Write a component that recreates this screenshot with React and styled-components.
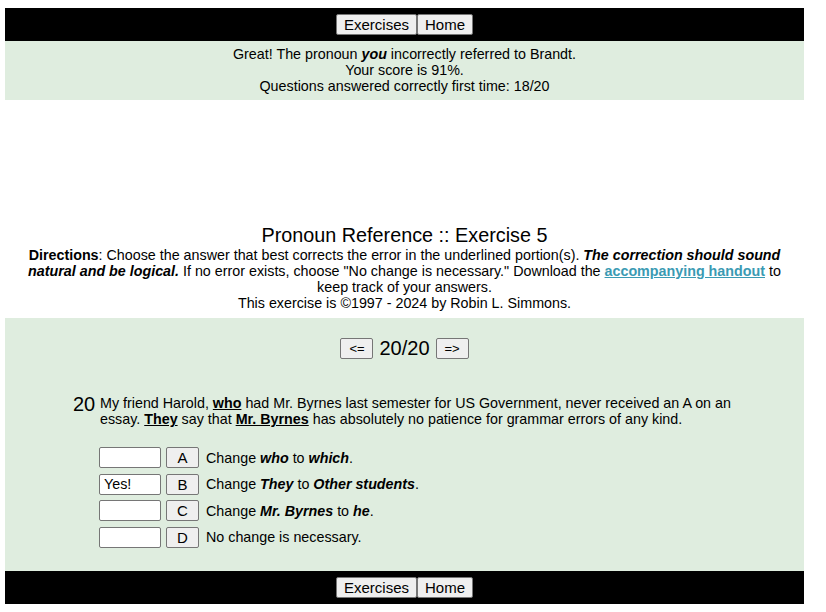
import styled, { createGlobalStyle } from 'styled-components';

const answers = [
    { letter: 'A', value: '', text: <>Change <b><i>who</i></b> to <b><i>which</i></b>.</> },
    { letter: 'B', value: 'Yes!', text: <>Change <b><i>They</i></b> to <b><i>Other students</i></b>.</> },
    { letter: 'C', value: '', text: <>Change <b><i>Mr. Byrnes</i></b> to <b><i>he</i></b>.</> },
    { letter: 'D', value: '', text: <>No change is necessary.</> },
];

const NavBar = () => (
    <Bar>
        <NavButton>Exercises</NavButton>
        <NavButton>Home</NavButton>
    </Bar>
);

const App = () => {
    return (
        <Page>
            <GlobalStyle />
            <NavBar />
            <Feedback>
                <div>Great! The pronoun <b><i>you</i></b> incorrectly referred to Brandt.</div>
                <div>Your score is 91%.</div>
                <div>Questions answered correctly first time: 18/20</div>
            </Feedback>
            <Intro>
                <Title>Pronoun Reference :: Exercise 5</Title>
                <Directions>
                    <b>Directions</b>: Choose the answer that best corrects the error in the underlined portion(s). <b><i>The correction should sound natural and be logical.</i></b> If no error exists, choose "No change is necessary." Download the <HandoutLink href="#">accompanying handout</HandoutLink> to keep track of your answers.
                    <br />
                    This exercise is ©1997 - 2024 by Robin L. Simmons.
                </Directions>
            </Intro>
            <Exercise>
                <Pager>
                    <SmallButton>&lt;=</SmallButton>
                    <Counter>20/20</Counter>
                    <SmallButton>=&gt;</SmallButton>
                </Pager>
                <Question>
                    <Number>20</Number>
                    <QuestionText>
                        My friend Harold, <u><b>who</b></u> had Mr. Byrnes last semester for US Government, never received an A on an essay. <u><b>They</b></u> say that <u><b>Mr. Byrnes</b></u> has absolutely no patience for grammar errors of any kind.
                    </QuestionText>
                </Question>
                <AnswerList>
                    {answers.map((item) => (
                        <AnswerRow key={item.letter}>
                            <ResultBox readOnly value={item.value} />
                            <LetterButton>{item.letter}</LetterButton>
                            <AnswerText>{item.text}</AnswerText>
                        </AnswerRow>
                    ))}
                </AnswerList>
            </Exercise>
            <NavBar />
        </Page>
    );
};

const GlobalStyle = createGlobalStyle`
    body {
        margin: 8px 22px 8px 5px;
        background: #ffffff;
        font-family: "Liberation Sans", Arial, sans-serif;
        font-size: 14.3px;
        color: #000000;
    }
`;

const Page = styled.div`
    width: 799px;
`;

const Bar = styled.div`
    background: #000000;
    display: flex;
    justify-content: center;
    padding: 6px 0;
`;

const NavButton = styled.button`
    font-family: "Liberation Sans", Arial, sans-serif;
    font-size: 15px;
    line-height: 17px;
    height: 21px;
    padding: 0 7px;
    background: #efefef;
    border: 1px solid #767676;
    border-radius: 2px;
    color: #000000;
`;

const Feedback = styled.div`
    background: #dfeddf;
    text-align: center;
    line-height: 16px;
    padding: 5px 0 6px;
`;

const Intro = styled.div`
    margin-top: 124px;
    text-align: center;
    padding: 0 20px;
    margin-bottom: 7px;
`;

const Title = styled.div`
    font-size: 19.8px;
    line-height: 23px;
`;

const Directions = styled.div`
    line-height: 16px;
`;

const HandoutLink = styled.a`
    color: #3a9ab3;
    font-weight: bold;
    text-decoration: underline;
`;

const Exercise = styled.div`
    background: #dfeddf;
    padding: 19px 0 23px;
`;

const Pager = styled.div`
    display: flex;
    justify-content: center;
    align-items: center;
    gap: 6px;
`;

const SmallButton = styled.button`
    font-family: "Liberation Sans", Arial, sans-serif;
    font-size: 13px;
    height: 21px;
    width: 33px;
    padding: 0;
    background: #efefef;
    border: 1px solid #767676;
    border-radius: 2px;
    color: #000000;
`;

const Counter = styled.span`
    font-size: 20px;
    line-height: 23px;
`;

const Question = styled.div`
    display: flex;
    margin: 34px 0 0 68px;
    width: 680px;
`;

const Number = styled.div`
    font-size: 20px;
    line-height: 20px;
    width: 27px;
    text-align: right;
    padding-right: 5px;
    box-sizing: border-box;
`;

const QuestionText = styled.div`
    line-height: 16px;
    flex: 1;
    padding-top: 1px;
`;

const AnswerList = styled.div`
    display: flex;
    flex-direction: column;
    gap: 5px;
    margin: 20px 0 0 94px;
`;

const AnswerRow = styled.div`
    display: flex;
    align-items: center;
    height: 21.5px;
`;

const ResultBox = styled.input`
    font-family: "Liberation Sans", Arial, sans-serif;
    font-size: 14.3px;
    width: 62px;
    height: 21px;
    box-sizing: border-box;
    padding: 1px 4px;
    background: #ffffff;
    border: 1px solid #767676;
    border-radius: 2px;
    color: #000000;
`;

const LetterButton = styled.button`
    font-family: "Liberation Sans", Arial, sans-serif;
    font-size: 15px;
    width: 33px;
    height: 21px;
    padding: 0;
    margin-left: 5px;
    background: #efefef;
    border: 1px solid #767676;
    border-radius: 2px;
    color: #000000;
`;

const AnswerText = styled.span`
    margin-left: 7px;
`;

export default App;
